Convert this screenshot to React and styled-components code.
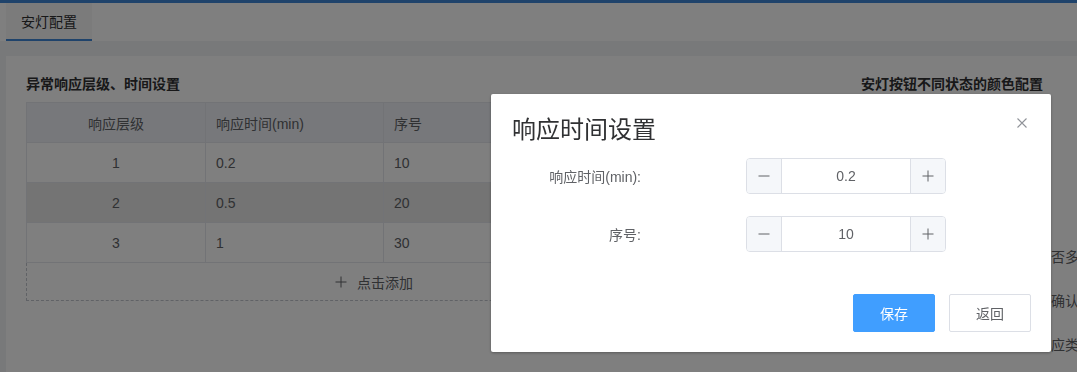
import React from "react";
import styled, { createGlobalStyle } from "styled-components";

const Global = createGlobalStyle`
  html, body { margin: 0; padding: 0; }
  body {
    font-family: "Liberation Sans", "Noto Sans CJK SC", sans-serif;
    background: #f0f2f5;
    width: 1077px;
    height: 372px;
    overflow: hidden;
  }
  * { box-sizing: border-box; }
`;

const Page = styled.div`
  width: 1077px;
  height: 372px;
  display: flex;
  flex-direction: column;
  background: #f0f2f5;
  overflow: hidden;
`;

const Header = styled.header`
  height: 41px;
  border-top: 3px solid #3f86d6;
  background: #fff;
  display: flex;
  align-items: stretch;
  padding-left: 6px;
`;

const Tab = styled.div`
  width: 86px;
  display: flex;
  align-items: center;
  justify-content: center;
  font-size: 14px;
  color: #303133;
  background: #f6f6f6;
  border-bottom: 2px solid ${(p) => (p.$active ? "#3f86d6" : "transparent")};
`;

const Main = styled.main`
  flex: 1;
  padding: 15px 0 0 6px;
  display: flex;
`;

const Card = styled.section`
  flex: 1;
  background: #fff;
  padding: 18px 0 0 20px;
  display: flex;
  gap: 139px;
`;

const Column = styled.div`
  display: flex;
  flex-direction: column;
  width: ${(p) => p.$width};
  flex-shrink: 0;
`;

const SectionTitle = styled.h3`
  margin: 0 0 8px;
  font-size: 14px;
  line-height: 20px;
  font-weight: bold;
  color: #303133;
  white-space: nowrap;
`;

const Table = styled.table`
  border-collapse: collapse;
  width: 696px;
  table-layout: fixed;
  font-size: 14px;
  color: #606266;
`;

const Th = styled.th`
  height: 40px;
  padding: 0 10px;
  font-weight: normal;
  background: #eef1f6;
  border: 1px solid #e4e7ed;
  text-align: ${(p) => (p.$center ? "center" : "left")};
  color: #606266;
`;

const Tr = styled.tr`
  background: ${(p) => (p.$hover ? "#e8e8e8" : "#fff")};
`;

const Td = styled.td`
  height: 40px;
  padding: 0 10px;
  border: 1px solid #e4e7ed;
  text-align: ${(p) => (p.$center ? "center" : "left")};
`;

const AddRow = styled.div`
  width: 696px;
  height: 38px;
  border: 1px dashed #c0c4cc;
  border-top: none;
  display: flex;
  align-items: center;
  justify-content: center;
  gap: 10px;
  font-size: 14px;
  color: #606266;
`;

const FormRow = styled.div`
  height: 44px;
  display: flex;
  align-items: center;
  font-size: 14px;
  color: #606266;
  white-space: nowrap;
  padding-left: ${(p) => p.$indent || 0}px;
`;

const Swatch = styled.span`
  width: 40px;
  height: 24px;
  border-radius: 3px;
  background: ${(p) => p.$color};
  margin-left: 8px;
`;

const Mask = styled.div`
  position: fixed;
  inset: 0;
  background: rgba(0, 0, 0, 0.5);
`;

const Dialog = styled.div`
  position: fixed;
  left: 491px;
  top: 94px;
  width: 560px;
  height: 258px;
  background: #fff;
  border-radius: 2px;
  box-shadow: 0 1px 3px rgba(0, 0, 0, 0.3);
  display: flex;
  flex-direction: column;
  padding: 18px 20px 20px 21px;
`;

const DialogTitle = styled.h2`
  margin: 0;
  font-size: 24px;
  line-height: 32px;
  font-weight: normal;
  color: #303133;
  font-family: "Noto Sans CJK SC", "Liberation Sans", sans-serif;
`;

const CloseButton = styled.button`
  position: absolute;
  top: 24px;
  right: 24px;
  width: 10px;
  height: 10px;
  padding: 0;
  border: none;
  background: none;
  display: flex;
`;

const DialogBody = styled.div`
  display: flex;
  flex-direction: column;
  gap: 22px;
  padding-top: 14px;
`;

const Field = styled.div`
  display: flex;
  align-items: center;
  height: 36px;
`;

const Label = styled.label`
  width: 129px;
  text-align: right;
  font-size: 14px;
  color: #606266;
  margin-right: 105px;
  white-space: nowrap;
`;

const Stepper = styled.div`
  width: 200px;
  height: 36px;
  display: flex;
  border: 1px solid #dcdfe6;
  border-radius: 4px;
  overflow: hidden;
`;

const StepButton = styled.button`
  width: 35px;
  height: 100%;
  padding: 0;
  border: none;
  background: #f5f7fa;
  display: flex;
  align-items: center;
  justify-content: center;
  ${(p) => (p.$side === "left" ? "border-right: 1px solid #dcdfe6;" : "border-left: 1px solid #dcdfe6;")}
`;

const StepValue = styled.div`
  flex: 1;
  display: flex;
  align-items: center;
  justify-content: center;
  font-size: 14px;
  color: #606266;
`;

const Footer = styled.div`
  margin-top: auto;
  display: flex;
  justify-content: flex-end;
  gap: 14px;
`;

const Button = styled.button`
  width: 82px;
  height: 38px;
  border-radius: 2px;
  font-size: 14px;
  font-family: "Noto Sans CJK SC", "Liberation Sans", sans-serif;
  border: 1px solid ${(p) => (p.$primary ? "#409eff" : "#dcdfe6")};
  background: ${(p) => (p.$primary ? "#409eff" : "#fff")};
  color: ${(p) => (p.$primary ? "#fff" : "#606266")};
`;

const Minus = () => (
  <svg width="12" height="12" viewBox="0 0 12 12">
    <path d="M0.5 6h11" stroke="#606266" strokeWidth="1" />
  </svg>
);

const Plus = ({ size = 12, color = "#606266" }) => (
  <svg width={size} height={size} viewBox="0 0 12 12">
    <path d="M0.5 6h11M6 0.5v11" stroke={color} strokeWidth="1" />
  </svg>
);

const rows = [
  { level: 1, time: "0.2", order: 10 },
  { level: 2, time: "0.5", order: 20, hover: true },
  { level: 3, time: "1", order: 30 },
];

const NumberInput = ({ value }) => (
  <Stepper>
    <StepButton $side="left"><Minus /></StepButton>
    <StepValue>{value}</StepValue>
    <StepButton $side="right"><Plus /></StepButton>
  </Stepper>
);

export default function App() {
  return (
    <>
      <Global />
      <Page>
        <Header>
          <Tab $active>安灯配置</Tab>
        </Header>
        <Main>
          <Card>
            <Column $width="696px">
              <SectionTitle>异常响应层级、时间设置</SectionTitle>
              <Table>
                <colgroup>
                  <col style={{ width: 179 }} />
                  <col style={{ width: 178 }} />
                  <col style={{ width: 170 }} />
                  <col style={{ width: 169 }} />
                </colgroup>
                <thead>
                  <tr>
                    <Th $center>响应层级</Th>
                    <Th>响应时间(min)</Th>
                    <Th>序号</Th>
                    <Th $center>操作</Th>
                  </tr>
                </thead>
                <tbody>
                  {rows.map((r) => (
                    <Tr key={r.level} $hover={r.hover}>
                      <Td $center>{r.level}</Td>
                      <Td>{r.time}</Td>
                      <Td>{r.order}</Td>
                      <Td $center>编辑 删除</Td>
                    </Tr>
                  ))}
                </tbody>
              </Table>
              <AddRow>
                <Plus size={12} color="#606266" />
                <span>点击添加</span>
              </AddRow>
            </Column>
            <Column $width="216px">
              <SectionTitle>安灯按钮不同状态的颜色配置</SectionTitle>
              <FormRow>待响应：<Swatch $color="#f56c6c" /></FormRow>
              <FormRow>响应中：<Swatch $color="#e6a23c" /></FormRow>
              <FormRow>已完成：<Swatch $color="#67c23a" /></FormRow>
              <FormRow $indent={176}>是否多人响应</FormRow>
              <FormRow $indent={176}>需确认关闭</FormRow>
              <FormRow $indent={176}>响应类型</FormRow>
            </Column>
          </Card>
        </Main>
      </Page>
      <Mask />
      <Dialog>
        <DialogTitle>响应时间设置</DialogTitle>
        <CloseButton aria-label="关闭">
          <svg width="10" height="10" viewBox="0 0 10 10">
            <path d="M0.5 0.5l9 9M9.5 0.5l-9 9" stroke="#909399" strokeWidth="1.1" />
          </svg>
        </CloseButton>
        <DialogBody>
          <Field>
            <Label>响应时间(min):</Label>
            <NumberInput value="0.2" />
          </Field>
          <Field>
            <Label>序号:</Label>
            <NumberInput value="10" />
          </Field>
        </DialogBody>
        <Footer>
          <Button $primary>保存</Button>
          <Button>返回</Button>
        </Footer>
      </Dialog>
    </>
  );
}
